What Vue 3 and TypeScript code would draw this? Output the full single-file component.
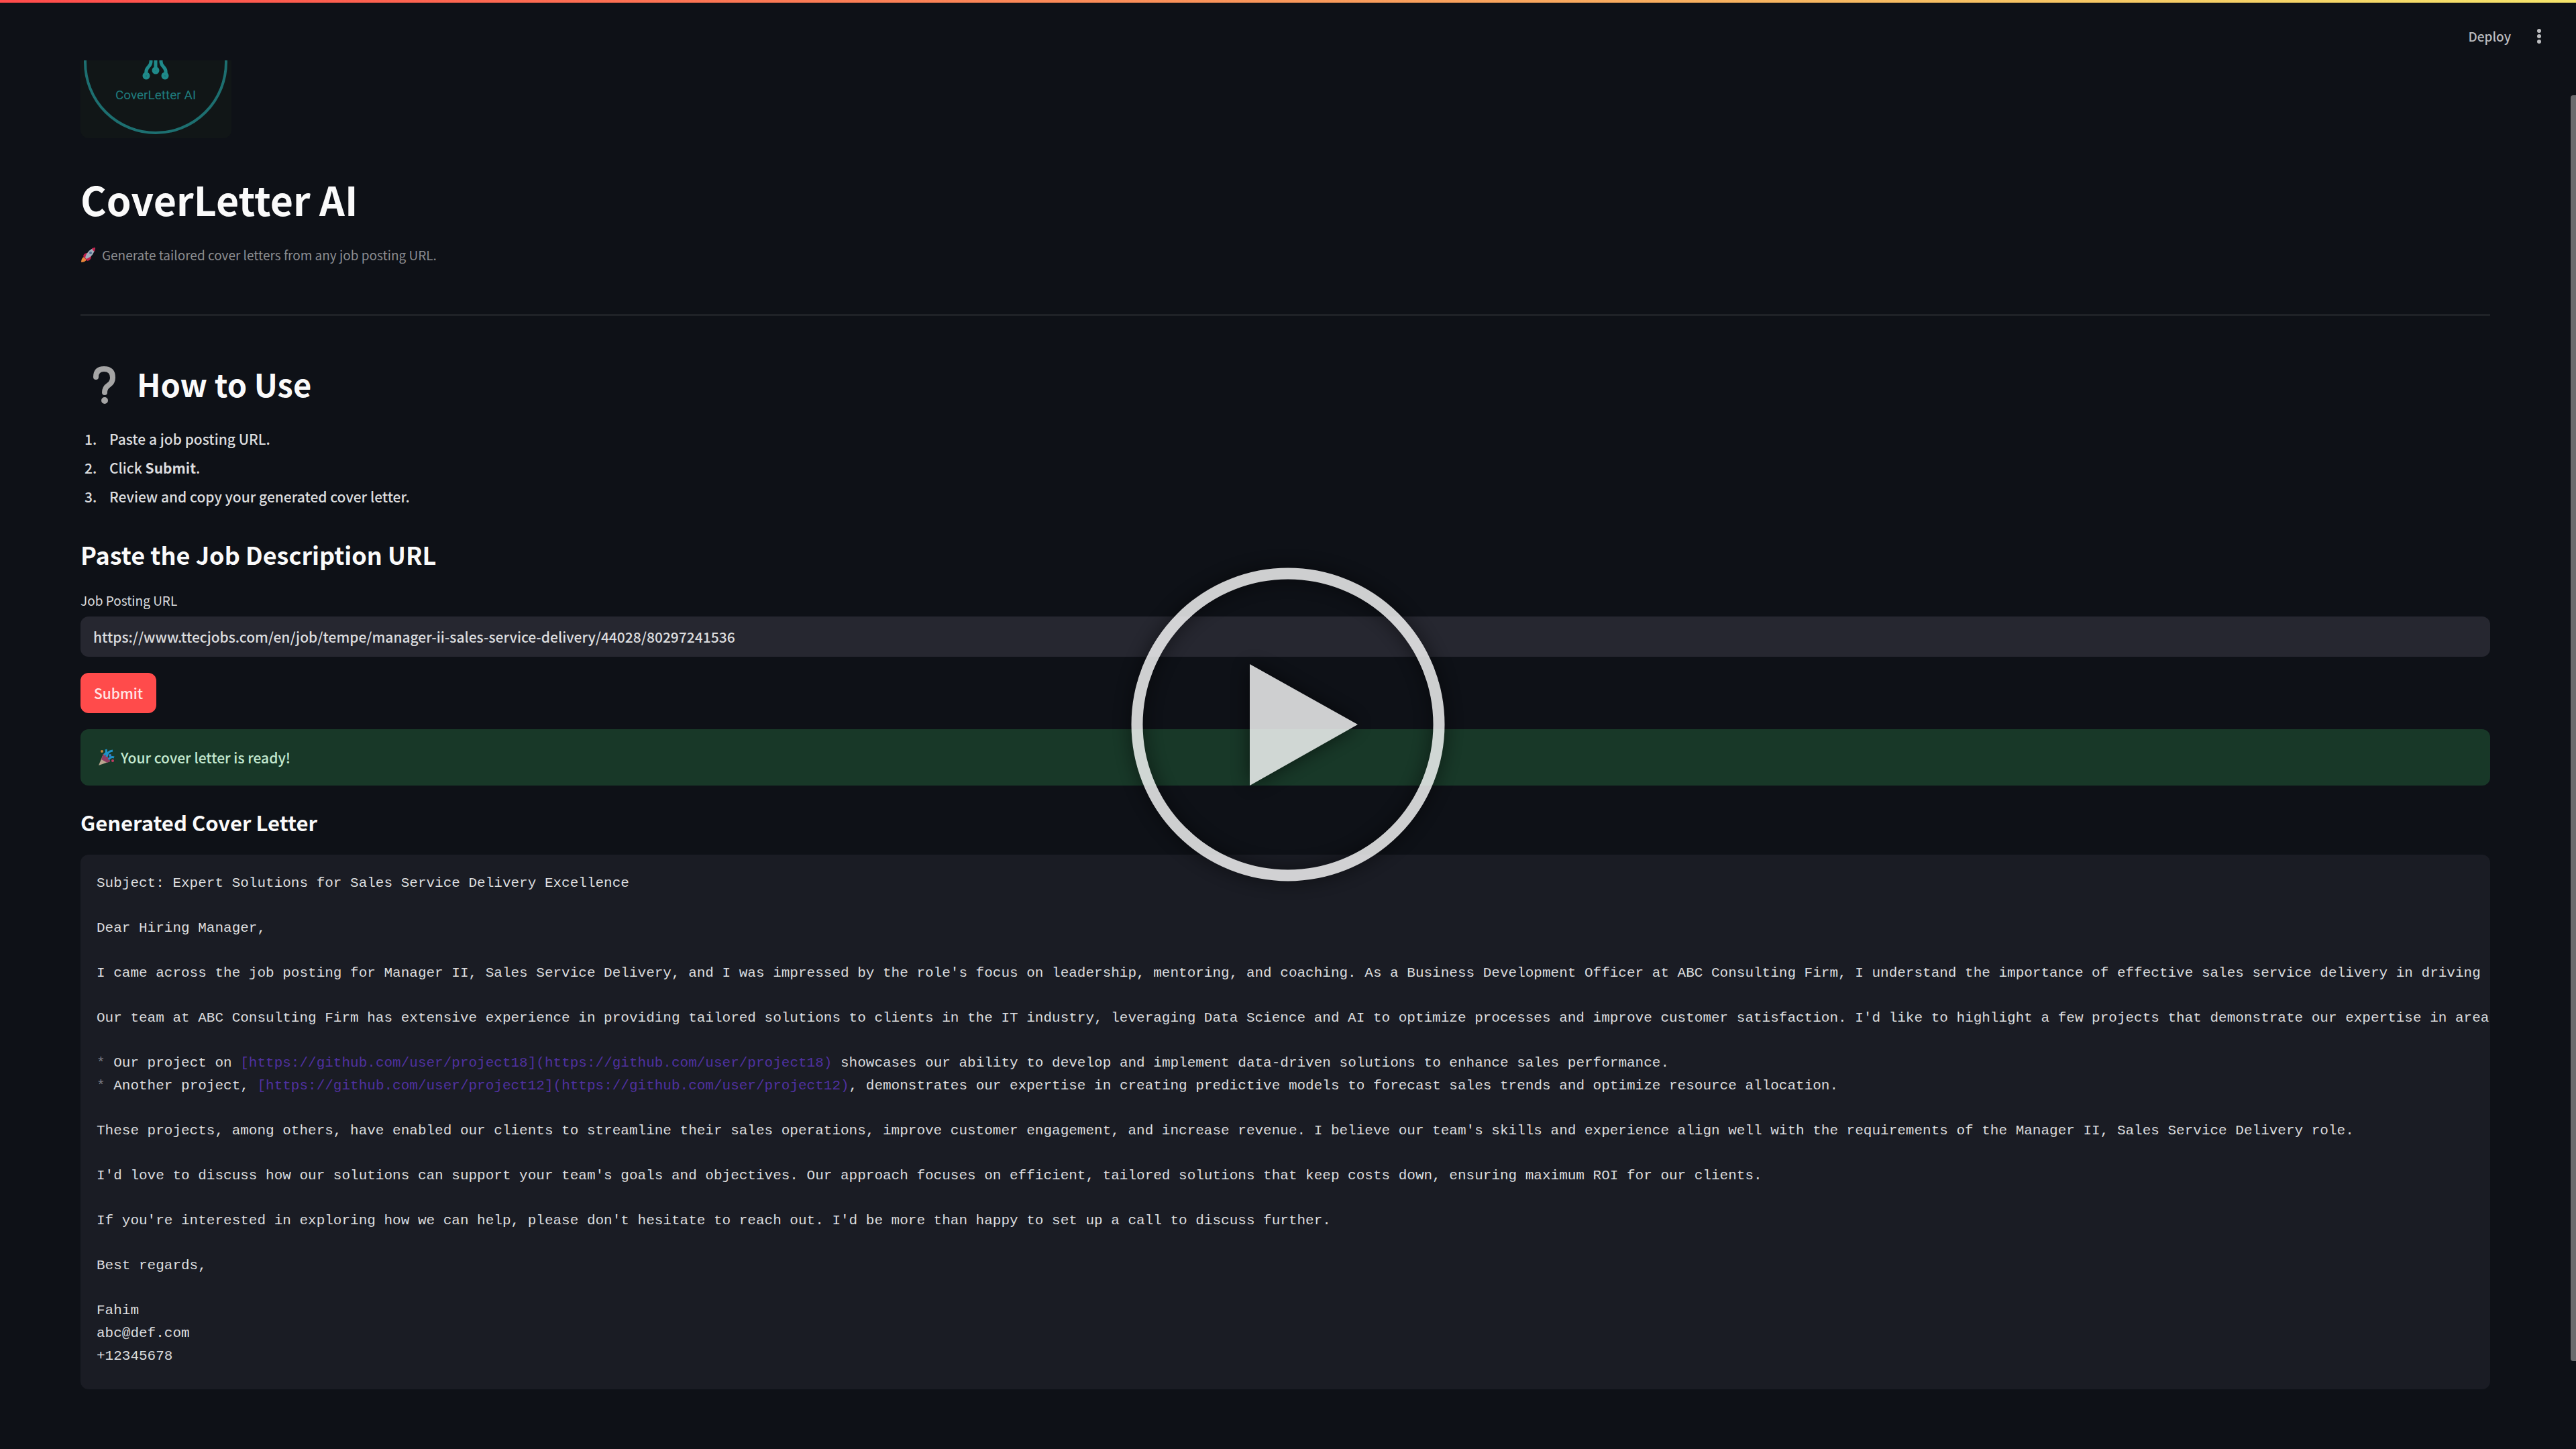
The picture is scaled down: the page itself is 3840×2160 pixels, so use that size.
<script setup lang="ts">
import { ref } from 'vue'

const url = ref('https://www.ttecjobs.com/en/job/tempe/manager-ii-sales-service-delivery/44028/80297241536')
</script>

<template>
  <div class="app">
    <header class="header">
      <button class="deploy" type="button">Deploy</button>
      <button class="menu" type="button" aria-label="Main menu">
        <svg width="8" height="24" viewBox="0 0 8 24" fill="#bcbdc0">
          <circle cx="4" cy="4" r="3" />
          <circle cx="4" cy="12" r="3" />
          <circle cx="4" cy="20" r="3" />
        </svg>
      </button>
    </header>

    <main class="main">
      <div class="logo">
        <svg width="225" height="225" viewBox="0 0 225 225" fill="none" stroke="#1f8a8a">
          <circle cx="112" cy="112" r="105" stroke-width="4" stroke="#1d6f70" />
          <g stroke-width="5" stroke-linecap="round">
            <path d="M105 106v5q0 4-4 8t-3 10" />
            <path d="M112 106v16" />
            <path d="M120 106v5q0 4 4 8t3 10" />
            <circle cx="98" cy="132" r="3" />
            <circle cx="112" cy="124" r="3" />
            <circle cx="126" cy="132" r="3" />
          </g>
          <text class="logo-text" x="112" y="167" text-anchor="middle" stroke="none" fill="#1f7c7d">CoverLetter AI</text>
        </svg>
      </div>

      <h1>CoverLetter AI</h1>
      <p class="caption">
        <svg width="24" height="24" viewBox="0 0 24 24">
          <path d="M1 23q0-6 4-8l4 4q-2 4-8 4z" fill="#e8863a" />
          <path d="M4 14q1-5 7-5l5 5q0 6-6 7z" fill="#c2214d" />
          <path d="M7 16Q10 4 22 1q-2 13-13 17z" fill="#a3aebb" />
          <path d="M17 2l5-1-1 6q-3-1-4-5z" fill="#c2214d" />
          <circle cx="15" cy="9" r="2" fill="#4b6f92" />
        </svg>
        <span>Generate tailored cover letters from any job posting URL.</span>
      </p>
      <hr />

      <h2>
        <svg width="66" height="60" viewBox="0 0 66 60" fill="none">
          <path d="M23 20q0-12 12-12 13 0 13 13 0 7-6 11-6 4-6 11" stroke="#a5a5a5" stroke-width="8" stroke-linecap="round" />
          <circle cx="36" cy="55" r="5" fill="#a5a5a5" />
        </svg>
        <span>How to Use</span>
      </h2>
      <ol class="steps">
        <li>Paste a job posting URL.</li>
        <li>Click <strong>Submit</strong>.</li>
        <li>Review and copy your generated cover letter.</li>
      </ol>

      <h3>Paste the Job Description URL</h3>
      <label class="label" for="job-url">Job Posting URL</label>
      <input id="job-url" v-model="url" class="input" type="text" />
      <button class="submit" type="button">Submit</button>

      <div class="alert" role="status">
        <svg width="26" height="26" viewBox="0 0 26 26">
          <path d="M1 25L8 8q8 3 10 11z" fill="#b9a48f" />
          <path d="M5 16l3-8q8 3 10 11l-4 2z" fill="#8f3b62" />
          <path d="M9 9q5-2 3-8M13 12q1-8 9-9M16 16q3-5 8-3" fill="none" stroke="#1f93c9" stroke-width="3" />
          <circle cx="18" cy="10" r="2" fill="#3a7bd0" />
          <circle cx="6" cy="4" r="2" fill="#c5893a" />
          <circle cx="22" cy="18" r="2" fill="#c23b62" />
        </svg>
        <span>Your cover letter is ready!</span>
      </div>

      <h4>Generated Cover Letter</h4>
      <div class="code">
        <p>Subject: Expert Solutions for Sales Service Delivery Excellence</p>
        <p>Dear Hiring Manager,</p>
        <p>I came across the job posting for Manager II, Sales Service Delivery, and I was impressed by the role's focus on leadership, mentoring, and coaching. As a Business Development Officer at ABC Consulting Firm, I understand the importance of effective sales service delivery in driving</p>
        <p>Our team at ABC Consulting Firm has extensive experience in providing tailored solutions to clients in the IT industry, leveraging Data Science and AI to optimize processes and improve customer satisfaction. I'd like to highlight a few projects that demonstrate our expertise in area</p>
        <p><i class="mark">*</i> Our project on <span class="link">[https://github.com/user/project18](https://github.com/user/project18)</span> showcases our ability to develop and implement data-driven solutions to enhance sales performance.<br /><i class="mark">*</i> Another project, <span class="link">[https://github.com/user/project12](https://github.com/user/project12)</span>, demonstrates our expertise in creating predictive models to forecast sales trends and optimize resource allocation.</p>
        <p>These projects, among others, have enabled our clients to streamline their sales operations, improve customer engagement, and increase revenue. I believe our team's skills and experience align well with the requirements of the Manager II, Sales Service Delivery role.</p>
        <p>I'd love to discuss how our solutions can support your team's goals and objectives. Our approach focuses on efficient, tailored solutions that keep costs down, ensuring maximum ROI for our clients.</p>
        <p>If you're interested in exploring how we can help, please don't hesitate to reach out. I'd be more than happy to set up a call to discuss further.</p>
        <p>Best regards,</p>
        <p>Fahim<br />abc@def.com<br />+12345678</p>
      </div>
    </main>

    <div class="scrollbar"></div>

    <button class="play" type="button" aria-label="Play video">
      <svg width="540" height="540" viewBox="0 0 540 540">
        <circle cx="270" cy="270" r="225" fill="none" stroke="#fff" stroke-width="17" />
        <path d="M213 180v181l161-91z" fill="#fff" />
      </svg>
    </button>
  </div>
</template>

<style>
body {
  background: #0e1117;
}
</style>

<style scoped>
.app {
  position: relative;
  box-sizing: border-box;
  min-height: 100vh;
  padding-bottom: 88px;
  overflow: hidden;
  background: #0e1117;
  color: #dcdddf;
  font-family: "Noto Sans CJK SC", "Noto Sans", sans-serif;
  font-size: 21px;
  font-weight: 500;
  line-height: 36px;
}

button {
  border: 0;
  padding: 0;
  background: none;
  color: inherit;
  font: inherit;
}

.header {
  display: flex;
  align-items: center;
  justify-content: flex-end;
  gap: 38px;
  box-sizing: border-box;
  height: 90px;
  padding: 14px 51px 0 0;
  border-top: 4px solid;
  border-image: linear-gradient(to right, #ff4b4b, #f5e56b) 1;
}

.deploy {
  color: #bcbdc0;
  font-size: 19px;
}

.menu svg {
  display: block;
}

.main {
  display: flex;
  flex-direction: column;
  margin: 0 128px 0 120px;
}

.logo {
  display: flex;
  align-items: flex-end;
  width: 225px;
  height: 116px;
  overflow: hidden;
  border-radius: 0 0 12px 12px;
  background: #111617;
}

.logo svg {
  flex: none;
}

.logo-text {
  font-family: Roboto, sans-serif;
  font-size: 19px;
  font-weight: 400;
}

h1,
h2,
h3,
h4,
p,
ol {
  margin: 0;
}

h1,
h2,
h3,
h4 {
  color: #fafafa;
  font-weight: 700;
}

h1 {
  margin-top: 51px;
  font-size: 59px;
  line-height: 80px;
}

.caption {
  display: flex;
  align-items: center;
  gap: 8px;
  margin-top: 25px;
  color: #8c8d91;
  font-size: 19px;
  font-weight: 400;
}

hr {
  width: 100%;
  height: 3px;
  margin: 70px 0 0;
  border: 0;
  background: #1f2227;
}

h2 {
  display: flex;
  align-items: center;
  gap: 18px;
  margin-top: 68px;
  font-size: 47px;
  line-height: 66px;
}

.steps {
  margin-top: 28px;
  padding-left: 29px;
  line-height: 43px;
}

.steps li {
  padding-left: 14px;
}

h3 {
  margin-top: 39px;
  font-size: 36px;
  line-height: 50px;
}

.label {
  margin-top: 26px;
  font-size: 19px;
  font-weight: 400;
}

.input {
  box-sizing: border-box;
  width: 100%;
  height: 60px;
  margin-top: 6px;
  padding: 0 19px;
  border: 0;
  border-radius: 12px;
  background: #262730;
  color: inherit;
  font: inherit;
}

.submit {
  align-self: flex-start;
  height: 60px;
  margin-top: 24px;
  padding: 0 20px;
  border-radius: 12px;
  background: #ff4b4b;
  color: #ffe5e5;
}

.alert {
  display: flex;
  align-items: center;
  gap: 8px;
  height: 84px;
  margin-top: 24px;
  padding: 0 26px;
  border-radius: 12px;
  background: #183828;
  color: #c3e8cf;
}

h4 {
  margin-top: 31px;
  font-size: 31px;
  line-height: 48px;
}

.code {
  display: flex;
  flex-direction: column;
  gap: 33px;
  margin-top: 24px;
  padding: 26px 0 32px 24px;
  overflow: hidden;
  border-radius: 12px;
  background: #1a1c24;
  color: #dcdddf;
  font-family: "Liberation Mono", monospace;
  font-weight: 400;
  line-height: 34px;
  white-space: nowrap;
}

.mark {
  color: #7c7e86;
  font-style: normal;
}

.link {
  color: #4f31a0;
}

.scrollbar {
  position: absolute;
  top: 142px;
  right: 0;
  bottom: 131px;
  width: 8px;
  border-radius: 4px 0 0 4px;
  background: #6b6b6e;
}

.play {
  position: absolute;
  inset: 0;
  width: 540px;
  height: 540px;
  margin: auto;
  opacity: 0.8;
}

.play svg {
  display: block;
  filter: drop-shadow(0 0 14px rgba(0, 0, 0, 0.7));
}
</style>
